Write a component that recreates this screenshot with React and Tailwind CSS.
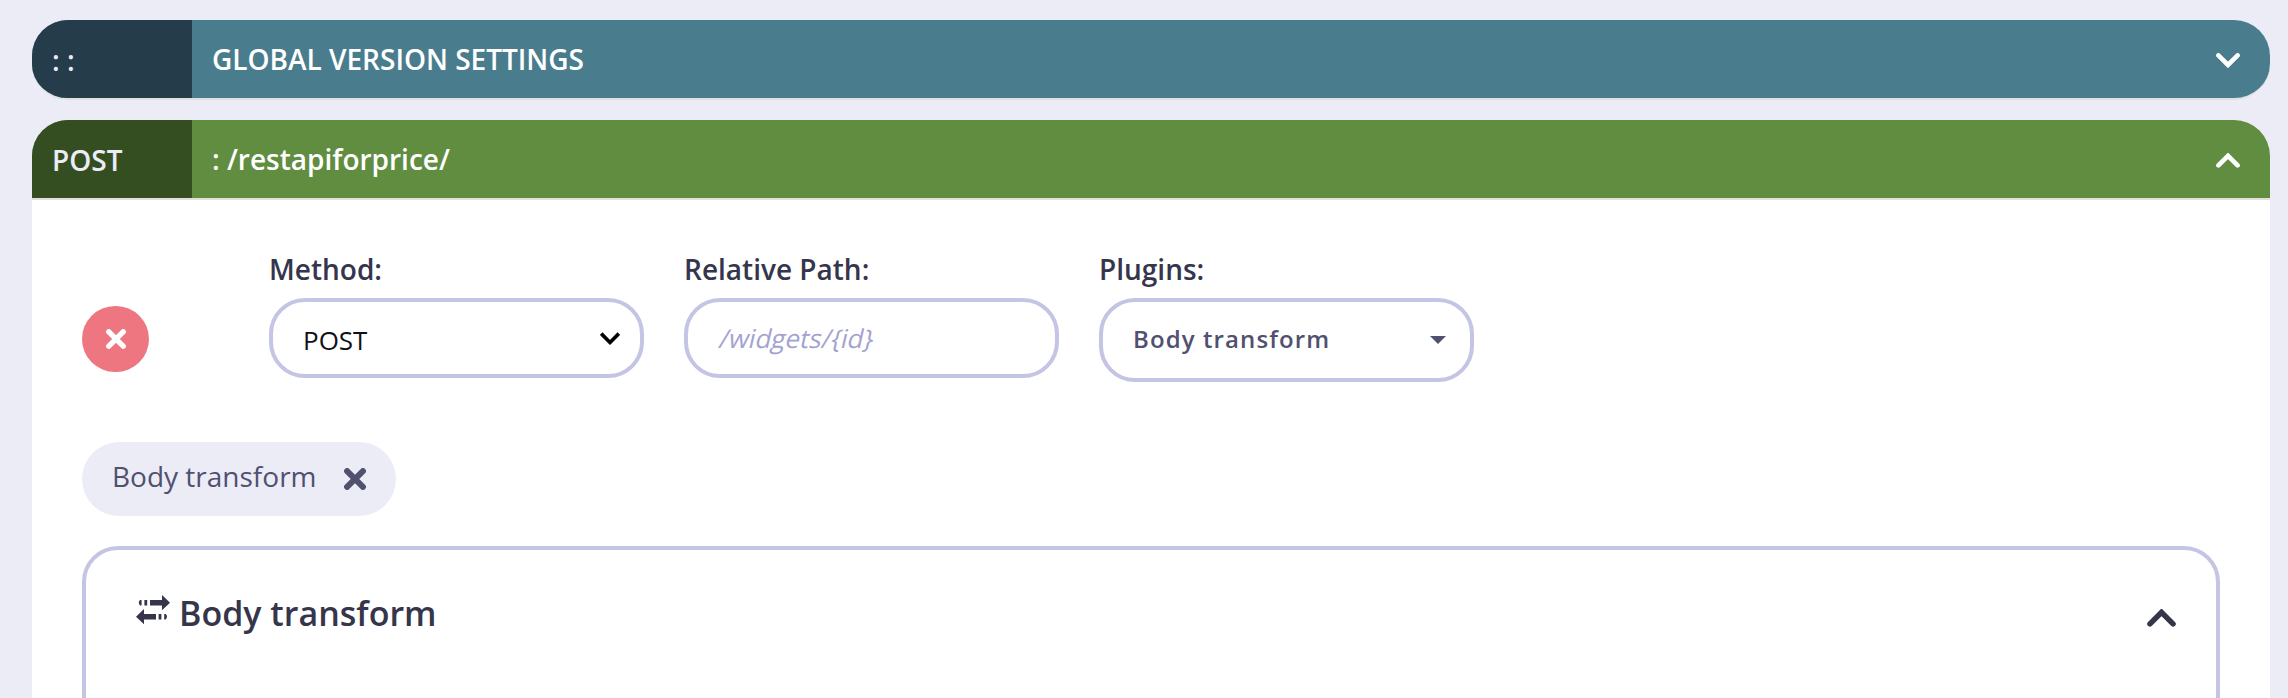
import React from "react";

const Chevron = ({ up, className }) => (
  <svg viewBox="0 0 24 15" className={className} fill="none" stroke="currentColor" strokeWidth="4.6" strokeLinecap="round" strokeLinejoin="miter">
    <path d={up ? "M2.4 12.4 L12 2.8 L21.6 12.4" : "M2.4 2.4 L12 12 L21.6 2.4"} />
  </svg>
);

const Cross = ({ className }) => (
  <svg viewBox="0 0 22 22" className={className} fill="none" stroke="currentColor" strokeWidth="6" strokeLinecap="round">
    <path d="M3.1 3.1 L18.9 18.9 M18.9 3.1 L3.1 18.9" />
  </svg>
);

const TransformIcon = () => (
  <svg viewBox="0 0 34 30" className="h-[30px] w-[34px]" fill="currentColor">
    <path d="M14 5H26V0L34 7.7L26 15.2V10.4H14ZM8.4 5h2.8v5.4h-2.8zM5.6 5v5.4h-1.6q-2.4 -2.7 0 -5.4z" />
    <path d="M20 19H8V14L0 21.7L8 29.2V24.4H20ZM22.6 19h2.8v5.4h-2.8zM28.2 19h1.6q2.4 2.7 0 5.4h-1.6z" />
  </svg>
);

const Field = ({ label, children }) => (
  <div className="flex w-[375px] flex-col">
    <label className="h-[56px] pt-[8px] text-[28px] leading-[38px] font-semibold text-[#35354d]">{label}</label>
    {children}
  </div>
);

export default function App() {
  return (
    <div className="h-[698px] w-[2288px] overflow-hidden bg-[#ececf7] pt-5 pr-[18px] pl-8 font-['Open_Sans','Noto_Sans',sans-serif]">
      <div className="mb-5 flex h-20 overflow-hidden rounded-[36px] border-b-2 border-[#e0e0e0] bg-[#497d8d] text-[28px] leading-[38px] font-semibold text-white">
        <div className="w-[160px] bg-[#253c4b] pt-[21px] pl-[20px] text-[#ececf7]">: :</div>
        <div className="grow pt-[20px] pl-[20px]">GLOBAL VERSION SETTINGS</div>
        <Chevron className="mt-[33px] mr-[30px] h-[15px] w-[24px]" />
      </div>
      <div className="flex h-20 overflow-hidden rounded-t-[36px] border-b-2 border-[#e0e0e0] bg-[#608d3f] text-[28px] leading-[38px] font-semibold text-white">
        <div className="w-[160px] bg-[#344e21] pt-[21px] pl-[20px] text-[#ececf7]">POST</div>
        <div className="grow pt-[20px] pl-[20px]">: /restapiforprice/</div>
        <Chevron up className="mt-[33px] mr-[30px] h-[15px] w-[24px]" />
      </div>
      <div className="h-[500px] bg-white px-[50px] pt-[42px]">
        <div className="flex h-[200px]">
          <button className="mt-[64px] mr-[120px] flex h-[66px] w-[67px] items-center justify-center rounded-full bg-[#ed7680] text-white">
            <Cross className="size-[20px]" />
          </button>
          <div className="flex gap-10">
            <Field label="Method:">
              <div className="flex h-20 items-center justify-between rounded-[36px] border-4 border-[#c4c4e4] pr-[20px] pl-[30px] text-[26px] leading-[36px] text-[#101018]">
                <span className="pt-[4px]">POST</span>
                <svg viewBox="0 0 20 13" className="h-[13px] w-[20px]" fill="none" stroke="#000" strokeWidth="3.6">
                  <path d="M1.2 1.6 L10 10.4 L18.8 1.6" />
                </svg>
              </div>
            </Field>
            <Field label="Relative Path:">
              <div className="flex h-20 items-center rounded-[36px] border-4 border-[#c4c4e4] pl-[32px] text-[26px] leading-[36px] text-[#a3a3d1]">
                <span className="inline-block skew-x-[-13deg]">/widgets/&#123;id&#125;</span>
              </div>
            </Field>
            <Field label="Plugins:">
              <div className="flex h-[84px] items-center justify-between rounded-[36px] border-4 border-[#c4c4e4] pr-[24px] pl-[30px] text-[24px] leading-[36px] font-semibold tracking-[1.1px] text-[#50506f]">
                <span className="pb-[2px]">Body transform</span>
                <svg viewBox="0 0 16 8" className="h-[8px] w-[16px]" fill="currentColor">
                  <path d="M0 0H16L8 8Z" />
                </svg>
              </div>
            </Field>
          </div>
        </div>
        <div className="flex h-[74px] w-[314px] items-center rounded-full bg-[#ececf7] pl-[30px] text-[28px] leading-[38px] text-[#50506f]">
          <span className="w-[232px] pb-[6px]">Body transform</span>
          <Cross className="size-[22px]" />
        </div>
        <div className="mt-[30px] flex h-[240px] items-start rounded-[36px] border-4 border-[#c4c4e4] text-[#35354b]">
          <div className="flex grow pt-[40px] pl-[50px]">
            <div className="pt-[5px] pr-[9px]"><TransformIcon /></div>
            <h2 className="text-[34px] leading-[46px] font-semibold">Body transform</h2>
          </div>
          <Chevron up className="mt-[59px] mr-[40px] h-[18px] w-[29px]" />
        </div>
      </div>
    </div>
  );
}
